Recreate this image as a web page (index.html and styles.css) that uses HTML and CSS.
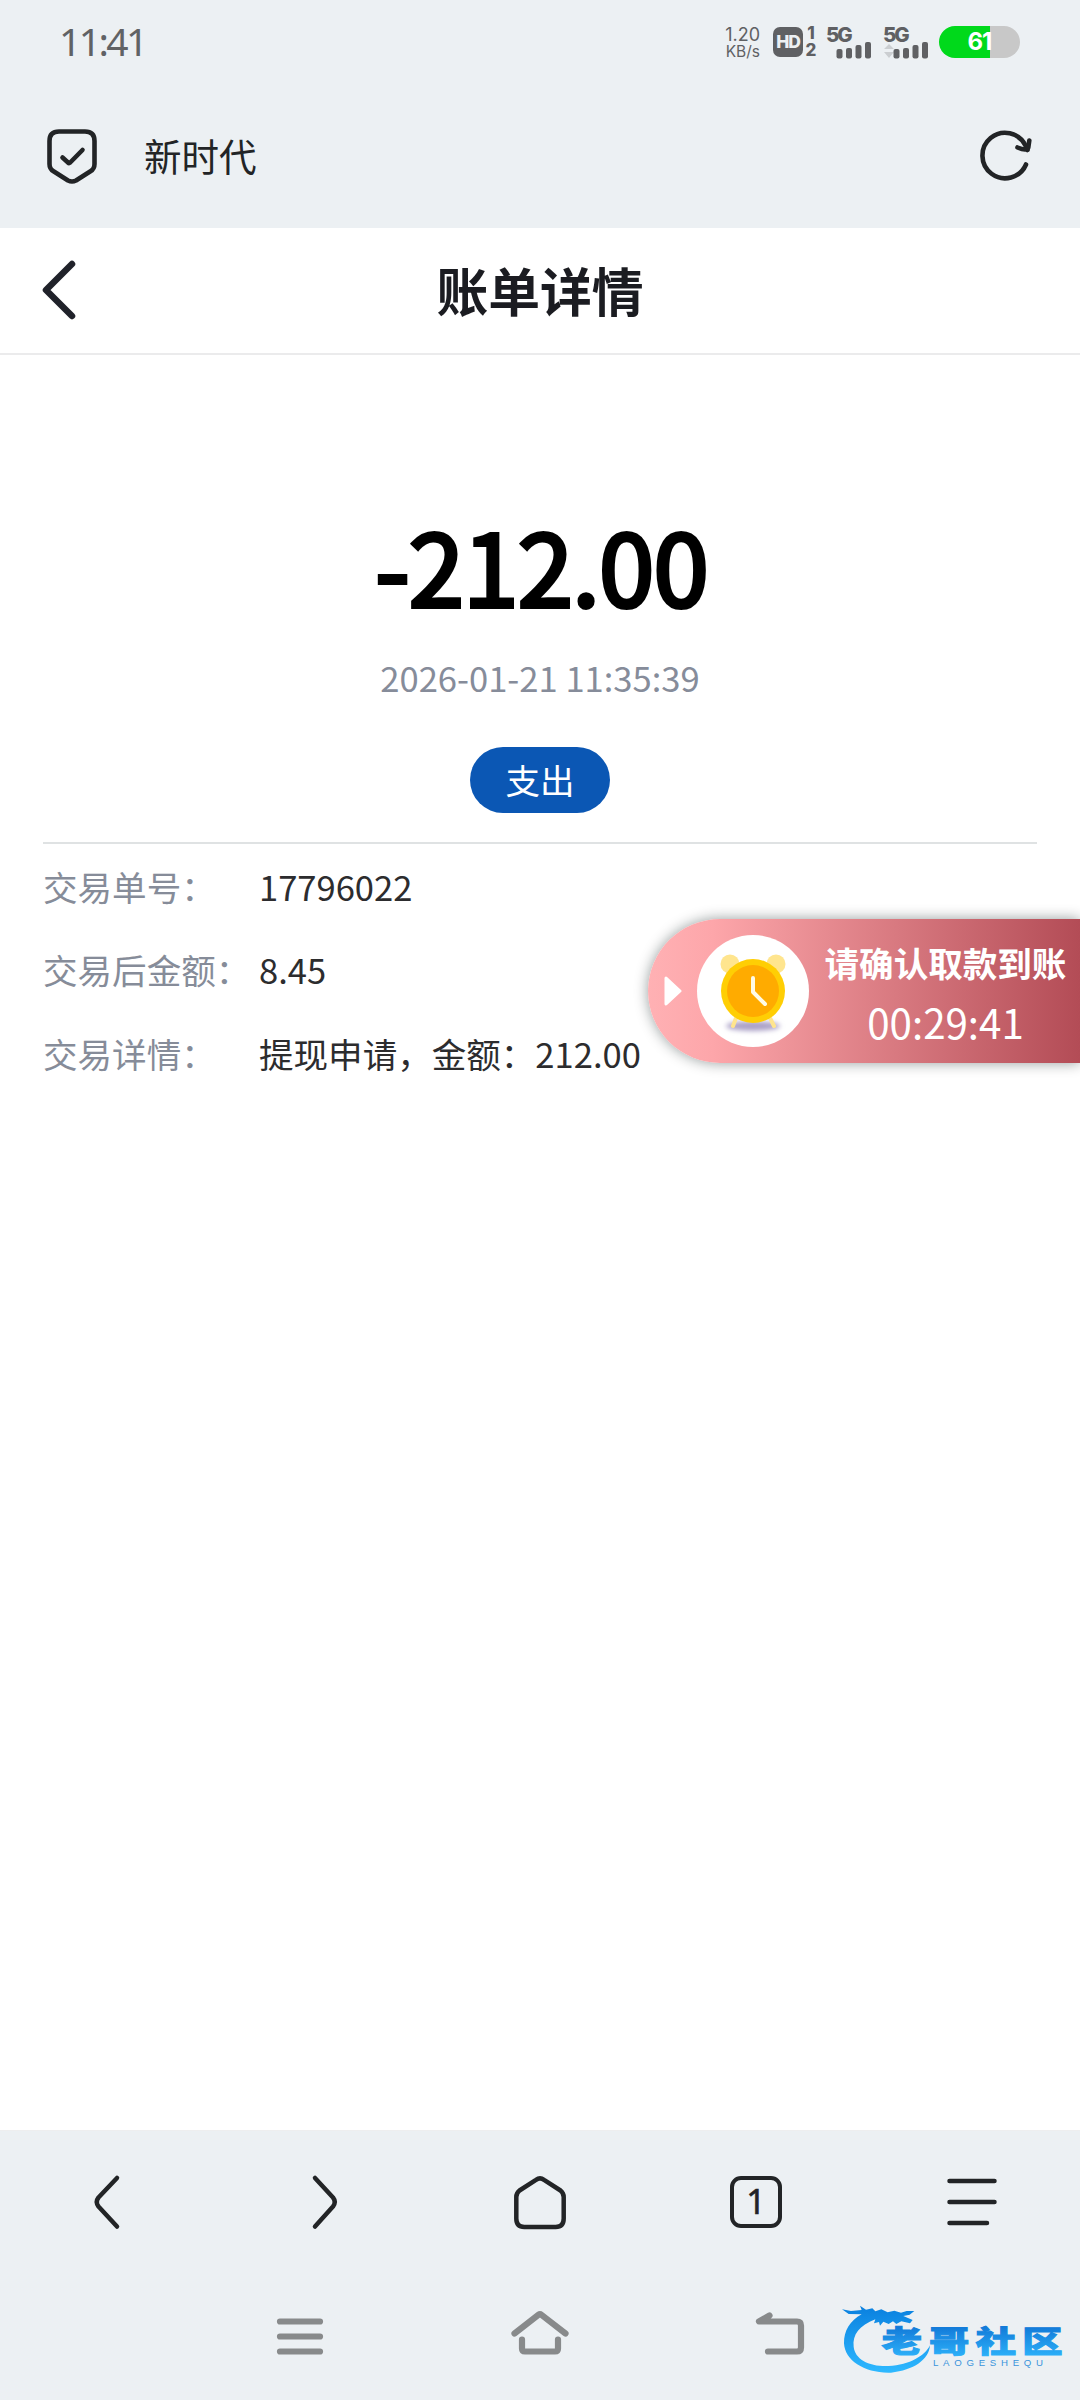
FILE: index.html
```html
<!DOCTYPE html>
<html lang="zh-CN">
<head>
<meta charset="utf-8">
<title>账单详情</title>
<link rel="stylesheet" href="styles.css">
</head>
<body>
<div class="screen">
  <div class="status-bar">
    <span class="clock">11:41</span>
    <div class="indicators">
      <div class="speed"><span>1.20</span><span class="unit">KB/s</span></div>
      <div class="hd">HD</div>
      <div class="sims"><span>1</span><span>2</span></div>
      <div class="signal">
        <span>5G</span>
        <svg width="46" height="17" viewBox="0 0 46 17"><g fill="#5f6063"><rect x="9.500" y="7" width="6" height="9.500" rx="2"/><rect x="19" y="6" width="6" height="10.500" rx="2"/><rect x="28.500" y="3" width="6" height="13.500" rx="2"/><rect x="38" y="0" width="6" height="16.500" rx="2"/></g></svg>
      </div>
      <div class="signal second">
        <span>5G</span>
        <svg width="46" height="17" viewBox="0 0 46 17"><path d="M0 7 5 2l5 5zM0 10h10l-5 6z" fill="#cbced1"/><g fill="#5f6063"><rect x="9.500" y="7" width="6" height="9.500" rx="2"/><rect x="19" y="6" width="6" height="10.500" rx="2"/><rect x="28.500" y="3" width="6" height="13.500" rx="2"/><rect x="38" y="0" width="6" height="16.500" rx="2"/></g></svg>
      </div>
      <div class="battery">61</div>
    </div>
  </div>

  <div class="address-bar">
    <svg class="shield" width="56" height="60" viewBox="0 0 56 60"><g fill="none" stroke="#222426" stroke-width="4.600" stroke-linecap="round" stroke-linejoin="round"><path d="M15 5.500H41Q50.500 5.500 50.500 15V38Q50.500 43 46.500 45.300L32 54.500Q28 56.500 24 54.500L9.500 45.300Q5.500 43 5.500 38V15Q5.500 5.500 15 5.500Z"/><path d="M18.500 31.500 24 36.500Q25 37.500 26.200 36.500L38.500 24"/></g></svg>
    <span class="site">新时代</span>
    <svg class="reload" width="60" height="60" viewBox="0 0 60 60"><g fill="none" stroke="#222426" stroke-width="4.600" stroke-linecap="round" stroke-linejoin="round"><path d="M51 38.500A22.700 22.700 0 1 1 50.500 19.500L52.500 24"/><path d="M42.500 21.500Q52 25.500 53.300 21.500L54.300 14.500"/></g></svg>
  </div>

  <div class="title-bar">
    <svg class="back" width="40" height="64" viewBox="0 0 40 64"><path d="M32 6 6 32 32 58" fill="none" stroke="#20222a" stroke-width="6.500" stroke-linecap="round" stroke-linejoin="round"/></svg>
    <h1>账单详情</h1>
  </div>

  <main class="bill">
    <div class="amount">-212.00</div>
    <div class="time">2026-01-21 11:35:39</div>
    <div class="kind">支出</div>
    <dl class="details">
      <div class="row"><dt>交易单号：</dt><dd>17796022</dd></div>
      <div class="row"><dt>交易后金额：</dt><dd>8.45</dd></div>
      <div class="row"><dt>交易详情：</dt><dd>提现申请，金额：212.00</dd></div>
    </dl>
  </main>

  <div class="tool-bar">
    <svg width="60" height="60" viewBox="0 0 60 60"><path class="ink" d="M39 6 20.500 25.500Q17 30 20.500 34.500L39 54.500"/></svg>
    <svg width="60" height="60" viewBox="0 0 60 60"><path class="ink" d="M21 6 39 25.500Q42.500 30 39 34.500L21 54.500"/></svg>
    <svg width="60" height="60" viewBox="0 0 60 60"><path class="ink" d="M26 7.800Q30 5 34 7.800L50.500 18.500Q53.700 21 53.700 25V46.500Q53.700 55 45.700 55H14.300Q6.300 55 6.300 46.500V25Q6.300 21 9.500 18.500Z"/></svg>
    <div class="tab-slot"><span class="tabs">1</span></div>
    <svg width="60" height="60" viewBox="0 0 60 60"><path class="ink" d="M7.500 9H52.500M7.500 30H52.500M7.500 51H45"/></svg>
  </div>

  <div class="system-bar">
    <svg width="60" height="60" viewBox="0 0 60 60"><path class="key" d="M10 15.500H50M10 30.500H50M10 45.500H50"/></svg>
    <svg width="60" height="60" viewBox="0 0 60 60"><path class="key" d="M4.500 27.500 28.500 8.800Q30 7.600 31.500 8.800L55.500 27.500M12 33.500V42.500Q12 45.500 15 45.500H45Q48 45.500 48 42.500V33.500"/></svg>
    <svg width="60" height="60" viewBox="0 0 60 60"><path class="key" d="M19.500 9.500 9 15.500H47Q51 15.500 51 19.500V41.500Q51 45.500 47 45.500H18"/></svg>
  </div>

  <div class="reminder">
    <svg class="arrow" width="18" height="30" viewBox="0 0 18 30"><path d="M2 2 16 15 2 28Z" fill="#fff" stroke="#fff" stroke-width="3" stroke-linejoin="round"/></svg>
    <svg class="alarm" width="112" height="112" viewBox="0 0 112 112">
      <defs><filter id="soft" x="-20%" y="-60%" width="140%" height="220%"><feGaussianBlur stdDeviation="2.500"/></filter></defs>
      <circle cx="56" cy="56" r="56" fill="#fff"/>
      <ellipse cx="56" cy="91" rx="27" ry="5" fill="#aaa0c6" filter="url(#soft)"/>
      <circle cx="33" cy="29" r="9.500" fill="#ffe58e"/><circle cx="79" cy="29" r="9.500" fill="#ffe58e"/>
      <path d="M39 83 36 91M73 83 77 91" stroke="#ffe58e" stroke-width="4" stroke-linecap="round"/>
      <circle cx="56" cy="56" r="32" fill="#ffce04"/><circle cx="56" cy="56" r="26" fill="#ffab00"/>
      <path d="M56 43V57L68 69" fill="none" stroke="#fffbe6" stroke-width="4" stroke-linecap="round" stroke-linejoin="round"/>
    </svg>
    <div class="message"><strong>请确认取款到账</strong><span>00:29:41</span></div>
  </div>

  <svg class="watermark" width="260" height="120" viewBox="0 0 780 360">
    <defs><linearGradient id="blue" gradientUnits="userSpaceOnUse" x1="0" y1="85" x2="0" y2="275"><stop offset="0" stop-color="#0b82e0"/><stop offset="1" stop-color="#2db8ff"/></linearGradient>
    <linearGradient id="letters" x1="0" y1="0" x2="0" y2="1"><stop offset="0.200" stop-color="#1279d8"/><stop offset="0.950" stop-color="#2eb4fb"/></linearGradient></defs>
    <path fill="url(#blue)" d="M66 88 93 93 125 90 120 77 138 89 157 85 166 94 184 88 203 97 223 92 243 98 260 93 283 93 269 104 250 108 278 120 270 130 244 124 229 132 219 124 206 132 190 125 180 137 177 126 162 130 166 118C118 137 97 164 101 200C105 238 147 260 206 258C270 255 315 227 330 196C327 239 281 271 213 278C136 281 74 242 72 190C71 153 90 122 125 103L86 102Z"/>
    <g fill="url(#letters)" stroke="url(#letters)" stroke-width="4" class="brand" transform="translate(0 217) scale(1 .74)">
      <text x="185" y="0">老</text><text x="327" y="0">哥</text><text x="467" y="0">社</text><text x="607" y="0">区</text>
    </g>
    <text class="latin" x="339" y="259" textLength="330" fill="#3a94dc">LAOGESHEQU</text>
  </svg>
</div>
</body>
</html>
```
FILE: styles.css
```css
* { box-sizing: border-box; }
body { margin: 0; background: #fff; font-family: "Noto Sans CJK SC", "Noto Sans", sans-serif; color: #2c2c2e; }
svg { display: block; flex: none; }
.screen { position: relative; width: 1080px; height: 2400px; overflow: hidden; display: flex; flex-direction: column; background: #fff; }

.status-bar { height: 84px; background: #ecf0f3; display: flex; justify-content: space-between; padding: 0 60px 0 59px; }
.clock { font: 39px/82px "Noto Sans", sans-serif; letter-spacing: -2.6px; color: #606265; }
.indicators { display: flex; align-items: flex-start; padding-top: 26px; color: #5f6063; font-family: Inter, sans-serif; }
.speed { width: 36px; margin-right: 13px; display: flex; flex-direction: column; align-items: flex-end; font-size: 18px; line-height: 17px; }
.speed .unit { font-size: 15.5px; line-height: 17px; }
.hd { width: 30px; height: 30px; margin-top: 1px; border-radius: 7px; background: #5f6063; color: #ecf0f3; font-size: 17.5px; font-weight: 800; line-height: 30px; text-align: center; letter-spacing: -1px; }
.sims { width: 14px; margin: 0 9px 0 1px; display: flex; flex-direction: column; align-items: center; font-size: 17px; font-weight: 800; line-height: 15px; gap: 2px; }
.signal { width: 46px; margin-right: 11px; display: flex; flex-direction: column; }
.signal span { font-size: 20.5px; line-height: 15px; font-weight: 800; height: 16px; letter-spacing: -2px; margin: 0 0 0 -1px; padding-top: 1px; }
.signal.second { margin-right: 9px; }
.battery { width: 81px; height: 32px; border-radius: 16px; background: linear-gradient(90deg, #00d91b 51px, #c8c8c8 51px); color: #fff; font-size: 24px; font-weight: 700; line-height: 31px; text-align: center; letter-spacing: -1px; }

.address-bar { height: 144px; background: #ecf0f3; display: flex; align-items: center; padding: 0 44px 0 44px; }
.site { margin: -3px 0 0 44px; flex: 1; font-size: 37.5px; line-height: 54px; color: #222426; }
.reload { margin-right: 1px; }

.title-bar { height: 127px; border-bottom: 2px solid #ebebec; display: grid; grid-template-columns: 120px 1fr 120px; align-items: center; }
.back { margin: -1px 0 0 40px; }
.title-bar h1 { margin: -2px 0 0; font-size: 51.8px; line-height: 76px; text-align: center; font-weight: 700; color: #1b1c21; }

.bill { flex: 1; display: flex; flex-direction: column; align-items: center; padding: 133px 43px 0; }
.amount { height: 152px; padding-left: 3px; font-size: 99.5px; line-height: 152px; letter-spacing: -.8px; color: #000; -webkit-text-stroke: 4px #000; }
.time { margin-top: 11px; height: 52px; font-size: 34.56px; line-height: 52px; color: #868c9a; }
.kind { margin-top: 44px; width: 140px; height: 66px; border-radius: 33px; background: #0b57b4; color: #fff; font-size: 34.56px; line-height: 64px; text-align: center; }
.details { margin: 29px 0 0; padding-top: 0; width: 100%; border-top: 2px solid #dfe2e3; font-size: 34.56px; line-height: 50px; }
.row { display: flex; height: 83.500px; align-items: center; }
.row dt { width: 216px; flex: none; white-space: nowrap; color: #868c99; }
.row dd { margin: 0; white-space: nowrap; }

.tool-bar { height: 145px; background: #ecf0f3; border-top: 1px solid #eeeeef; padding-bottom: 3px; display: grid; grid-template-columns: repeat(5, 216px); justify-items: center; align-items: center; }
.ink { fill: none; stroke: #222426; stroke-width: 4.5px; stroke-linecap: round; stroke-linejoin: round; }
.tab-slot { display: grid; place-items: center; width: 60px; height: 60px; }
.tabs { width: 52px; height: 52px; border: 4.500px solid #222426; border-radius: 11px; font: 400 34px/42px "Noto Sans", sans-serif; text-align: center; color: #222426; -webkit-text-stroke: .6px #222426; }
.system-bar { height: 125px; background: #ecf0f3; display: grid; grid-template-columns: repeat(3, 240px); justify-content: center; justify-items: center; align-items: start; padding-top: 31px; }
.key { fill: none; stroke: #888a8b; stroke-width: 6.2px; stroke-linecap: round; stroke-linejoin: round; }

.reminder { position: absolute; top: 919px; right: 0; width: 432px; height: 144px; border-radius: 72px 0 0 72px; background: linear-gradient(90deg, #ffb1b4 0, #fda6aa 15%, #b34c56 100%); box-shadow: 0 0 14px rgba(0, 20, 20, .42); display: flex; align-items: center; padding-left: 16px; color: #fff; }
.alarm { margin-left: 15px; }
.message { width: 259px; margin-left: 7px; padding-top: 1px; display: flex; flex-direction: column; align-items: center; white-space: nowrap; }
.message strong { font-size: 34.56px; line-height: 60px; }
.message span { font-size: 40.3px; line-height: 60px; }

.watermark { position: absolute; left: 820px; top: 2280px; }
.brand { font-size: 121px; font-weight: 900; }
.latin { font: 29px "Liberation Sans", sans-serif; }
```
